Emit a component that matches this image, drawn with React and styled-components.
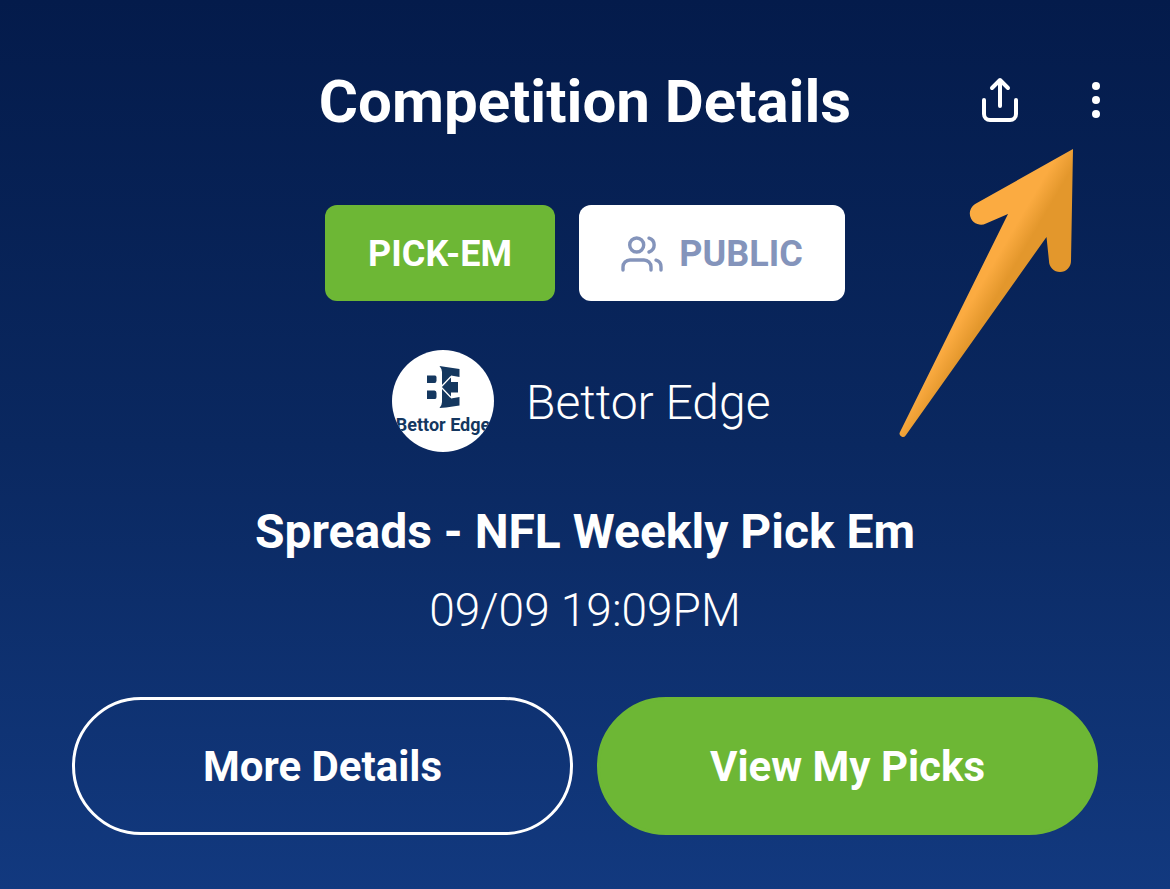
import styled, { createGlobalStyle } from "styled-components";

const GlobalStyle = createGlobalStyle`
  * {
    box-sizing: border-box;
  }
  body {
    margin: 0;
    background: #12387f;
    font-family: Roboto, "Liberation Sans", sans-serif;
    color: #ffffff;
  }
`;

const Page = styled.main`
  position: relative;
  display: flex;
  flex-direction: column;
  min-height: 100vh;
  padding: 64px 72px 54px;
  background: linear-gradient(180deg, #041b4b 0%, #0a2860 50%, #12397f 100%);
`;

const Header = styled.header`
  display: grid;
  grid-template-columns: 1fr auto 1fr;
  align-items: center;
  height: 72px;
`;
const Title = styled.h1`
  grid-column: 2;
  margin: 0;
  padding-top: 4px;
  font-size: 60px;
  line-height: 68px;
  font-weight: 700;
`;
const Actions = styled.div`
  display: flex;
  justify-content: flex-end;
  gap: 56px;
  margin-right: -19px;
`;
const IconButton = styled.button`
  display: flex;
  justify-content: center;
  width: 40px;
  padding: 0;
  border: none;
  background: none;
  color: inherit;
  cursor: pointer;
`;

const Tags = styled.div`
  display: flex;
  justify-content: center;
  gap: 24px;
  margin-top: 69px;
`;
const Tag = styled.span`
  display: flex;
  align-items: center;
  justify-content: center;
  gap: 16px;
  min-width: ${({ $wide }) => ($wide ? 266 : 230)}px;
  height: 96px;
  padding-top: 2px;
  border-radius: 12px;
  background: ${({ $bg }) => $bg};
  color: ${({ $color }) => $color};
  font-size: 36px;
  font-weight: 700;
`;

const Host = styled.div`
  display: flex;
  align-items: center;
  justify-content: center;
  gap: 32px;
  margin-top: 49px;
`;
const Avatar = styled.div`
  display: flex;
  flex-direction: column;
  align-items: center;
  width: 102px;
  height: 102px;
  padding-top: 16px;
  border-radius: 50%;
  overflow: hidden;
  background: #ffffff;
  color: #14375f;
`;
const AvatarName = styled.span`
  margin-top: 4px;
  font-size: 18px;
  line-height: 24px;
  font-weight: 700;
  white-space: nowrap;
`;
const HostName = styled.span`
  min-width: 252px;
  padding-top: 4px;
  font-size: 48px;
  line-height: 60px;
  font-weight: 300;
`;

const Name = styled.h2`
  margin: 50px 0 0;
  font-size: 48px;
  line-height: 60px;
  font-weight: 700;
  text-align: center;
`;
const StartTime = styled.time`
  margin-top: 18px;
  font-size: 46px;
  line-height: 60px;
  font-weight: 300;
  text-align: center;
`;

const Buttons = styled.div`
  display: grid;
  grid-template-columns: 1fr 1fr;
  gap: 24px;
  margin-top: 57px;
`;
const Button = styled.button`
  height: 138px;
  border: 3px solid ${({ $primary }) => ($primary ? "#6db735" : "#ffffff")};
  border-radius: 69px;
  background: ${({ $primary }) => ($primary ? "#6db735" : "transparent")};
  color: #ffffff;
  font-family: inherit;
  font-size: 42px;
  font-weight: 700;
  cursor: pointer;
`;

const Pointer = styled.svg`
  position: absolute;
  top: 148px;
  right: 92px;
  pointer-events: none;
`;

const ShareIcon = () => (
  <svg
    width="40"
    height="48"
    fill="none"
    stroke="currentColor"
    strokeWidth="4"
    strokeLinecap="round"
    strokeLinejoin="round"
  >
    <path d="M3 24v14a6 6 0 0 0 6 6h20a6 6 0 0 0 6-6V24" />
    <path d="M19 30V5M11 12l8-8 8 8" />
  </svg>
);

const MoreIcon = () => (
  <svg width="10" height="48" fill="currentColor">
    <circle cx="4" cy="10" r="4" />
    <circle cx="4" cy="24" r="4" />
    <circle cx="4" cy="38" r="4" />
  </svg>
);

const UsersIcon = () => (
  <svg
    width="42"
    height="36"
    fill="none"
    stroke="currentColor"
    strokeWidth="3.4"
    strokeLinecap="round"
  >
    <circle cx="15.700" cy="9" r="7" />
    <path d="M2 34v-3a7 7 0 0 1 7-7h14a7 7 0 0 1 7 7v3" />
    <path d="M28 2.200a7.200 7.200 0 0 1 0 13.800" />
    <path d="M35 24.200a7 7 0 0 1 5 6.800v3" />
  </svg>
);

const EdgeLogo = () => (
  <svg width="34" height="43" fill="currentColor">
    <path d="M1 9.500h8q1.500 0 1.500 2v3q0 2.500-2 2.500H1z" />
    <path d="M1 24.500h7.500q2 0 2 2.500v4q0 2-1.500 2H1z" />
    <path d="M13.500 0L20 1L33.500 3V11L25 9.500V16H32V26.500H25V32.500L33.500 31V39.500L20 41.500L13.500 42Q16 39 16 36V6Q16 3 13.500 0z" />
    <path
      d="M25 10.500L15 21L25 31.500"
      fill="none"
      stroke="#ffffff"
      strokeWidth="1.300"
    />
  </svg>
);

const App = () => {
  return (
    <>
      <GlobalStyle />
      <Page>
        <Header>
          <Title>Competition Details</Title>
          <Actions>
            <IconButton aria-label="Share">
              <ShareIcon />
            </IconButton>
            <IconButton aria-label="More options">
              <MoreIcon />
            </IconButton>
          </Actions>
        </Header>

        <Tags>
          <Tag $bg="#6db735" $color="#ffffff">
            PICK-EM
          </Tag>
          <Tag $wide $bg="#ffffff" $color="#8494bb">
            <UsersIcon />
            PUBLIC
          </Tag>
        </Tags>

        <Host>
          <Avatar>
            <EdgeLogo />
            <AvatarName>Bettor Edge</AvatarName>
          </Avatar>
          <HostName>Bettor Edge</HostName>
        </Host>

        <Name>Spreads - NFL Weekly Pick Em</Name>
        <StartTime>09/09 19:09PM</StartTime>

        <Buttons>
          <Button>More Details</Button>
          <Button $primary>View My Picks</Button>
        </Buttons>

        <Pointer width="180" height="290" viewBox="898 148 180 290">
          <defs>
            <linearGradient
              id="pointerFill"
              gradientUnits="userSpaceOnUse"
              x1="980"
              y1="286"
              x2="997"
              y2="296"
            >
              <stop offset="0" stopColor="#fbab41" />
              <stop offset="1" stopColor="#e3972c" />
            </linearGradient>
          </defs>
          <path
            fill="url(#pointerFill)"
            d="M1073 149L976 203.500A11 11 0 0 0 986 223.500L1008 214L900 432A3 3 0 0 0 906 435L1046.500 237L1049 261A11 11 0 0 0 1071 261z"
          />
        </Pointer>
      </Page>
    </>
  );
};

export default App;
